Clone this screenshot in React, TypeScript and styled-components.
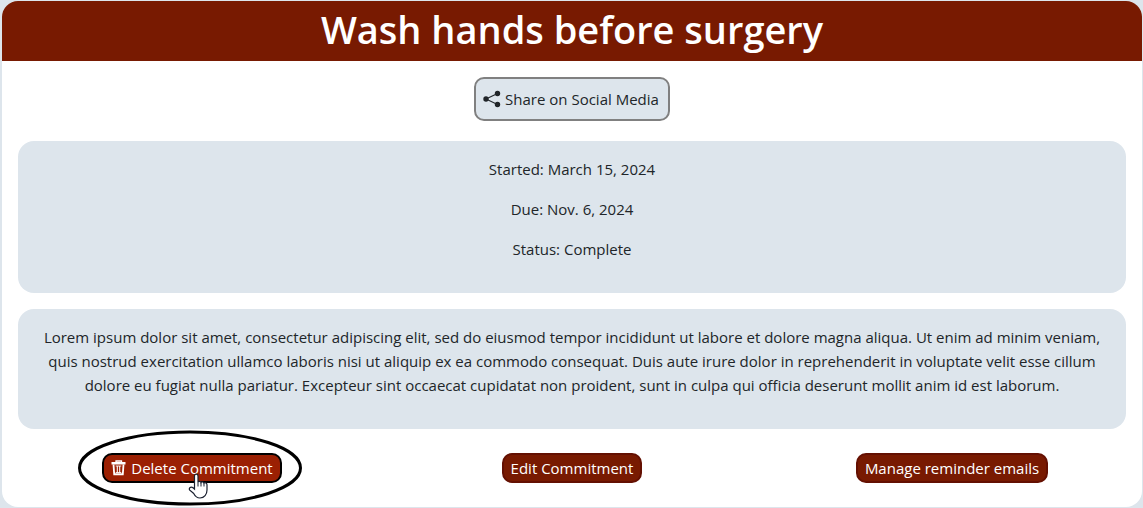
import React from 'react';
import styled, { createGlobalStyle } from 'styled-components';

const GlobalStyle = createGlobalStyle`
  *, *::before, *::after { box-sizing: border-box; }
  body {
    margin: 0;
    padding: 1px 1px 1px 2px;
    background: #dde5ec;
    color: #212529;
    font-family: "Segoe UI", "Open Sans", "Noto Sans", sans-serif;
    font-size: 15px;
    line-height: 24px;
  }
`;

const Card = styled.main`
  background: #fff;
  border-radius: 16px;
  overflow: hidden;
  text-align: center;
`;

const Header = styled.header`
  background: #781a01;
  color: #fff;
  padding: 4px 16px 8px;
`;

const Title = styled.h1`
  margin: 0;
  font-size: 38px;
  font-weight: 600;
  line-height: 48px;
`;

const Body = styled.div`
  display: flex;
  flex-direction: column;
  gap: 16px;
  padding: 16px 16px 0;
`;

const ShareButton = styled.button`
  display: flex;
  align-items: center;
  gap: 4px;
  align-self: center;
  height: 44px;
  margin-bottom: 4px;
  padding: 0 9px 0 7px;
  border: 2px solid #808080;
  border-radius: 10px;
  background: #dde5ec;
  color: inherit;
  font: inherit;
  cursor: pointer;
`;

const Panel = styled.section`
  padding: 16px;
  border-radius: 16px;
  background: #dde5ec;
`;

const Line = styled.p`
  margin: 0 0 16px;
`;

const Actions = styled.div`
  display: grid;
  grid-template-columns: repeat(3, 1fr);
  justify-items: center;
  padding: 24px 0;
`;

const ActionButton = styled.button<{ $active?: boolean }>`
  display: flex;
  align-items: center;
  gap: 4px;
  height: 30px;
  padding: 0 7px;
  border: 2px solid ${(p) => (p.$active ? '#000' : '#641002')};
  border-radius: 10px;
  background: ${(p) => (p.$active ? '#9b2003' : '#781a01')};
  color: #fff;
  font: inherit;
  white-space: nowrap;
  cursor: pointer;
`;

const Highlighted = styled.div`
  position: relative;
`;

const Ring = styled.svg`
  position: absolute;
  left: 50%;
  top: 50%;
  transform: translate(-50%, -50%);
  pointer-events: none;
`;

const Pointer = styled.svg`
  position: absolute;
  left: 48%;
  top: 20px;
  pointer-events: none;
`;

const ShareIcon = () => (
  <svg width="18" height="18" viewBox="0 0 18 18" fill="currentColor" aria-hidden="true">
    <path d="M14.500 3.500 3 9l11.500 5.500" fill="none" stroke="currentColor" strokeWidth="1.100" />
    <circle cx="14.500" cy="3.500" r="2.700" />
    <circle cx="3" cy="9" r="2.700" />
    <circle cx="14.500" cy="14.500" r="2.700" />
  </svg>
);

const TrashIcon = () => (
  <svg width="16" height="16" viewBox="0 0 16 16" fill="none" stroke="currentColor" aria-hidden="true">
    <path d="M0.500 3.250h14" strokeWidth="2.500" />
    <path d="M5 2V1h5.500v1" strokeWidth="1.300" />
    <path d="M2.500 4.500 3.200 14.250h8.600l.7-9.750" strokeWidth="1.800" />
    <path d="M6.300 6v6.500M8.700 6v6.500" strokeWidth="1.100" />
    <path d="M4.700 6h5.600M4.700 12.500h5.600" strokeWidth="0.900" />
  </svg>
);

export default function App() {
  return (
    <>
      <GlobalStyle />
      <Card>
        <Header>
          <Title>Wash hands before surgery</Title>
        </Header>
        <Body>
          <ShareButton type="button">
            <ShareIcon />
            Share on Social Media
          </ShareButton>
          <Panel>
            <Line>Started: March 15, 2024</Line>
            <Line>Due: Nov. 6, 2024</Line>
            <Line>Status: Complete</Line>
          </Panel>
          <Panel>
            <Line>
              Lorem ipsum dolor sit amet, consectetur adipiscing elit, sed do eiusmod tempor incididunt ut
              labore et dolore magna aliqua. Ut enim ad minim veniam, quis nostrud exercitation ullamco
              laboris nisi ut aliquip ex ea commodo consequat. Duis aute irure dolor in reprehenderit in
              voluptate velit esse cillum dolore eu fugiat nulla pariatur. Excepteur sint occaecat cupidatat
              non proident, sunt in culpa qui officia deserunt mollit anim id est laborum.
            </Line>
          </Panel>
        </Body>
        <Actions>
          <Highlighted>
            <ActionButton type="button" $active>
              <TrashIcon />
              Delete Commitment
            </ActionButton>
            <Ring width="228" height="76" viewBox="0 0 228 76" aria-hidden="true">
              <ellipse cx="112" cy="38" rx="110.500" ry="36" fill="none" stroke="#000" strokeWidth="3" />
            </Ring>
            <Pointer width="20" height="26" viewBox="0 0 20 26" aria-hidden="true">
              <path
                d="M6.500 16V3c0-2.500 3.500-2.500 3.500 0v6c.5-1 2.500-1 3 .5.500-1 2.500-.7 3 .7.700-.9 3-.5 3 1.500V17c0 4.500-2.700 8-7 8-3 0-4.800-1.500-6.300-4.500L1.500 17C.5 14.500 3.500 12.800 6.500 16Z"
                fill="#fff"
                stroke="#1a2030"
                strokeWidth="1.200"
              />
              <path d="M10 9v4.500M13 10v3.500M16 10.500v3" stroke="#1a2030" />
            </Pointer>
          </Highlighted>
          <ActionButton type="button">Edit Commitment</ActionButton>
          <ActionButton type="button">Manage reminder emails</ActionButton>
        </Actions>
      </Card>
    </>
  );
}
